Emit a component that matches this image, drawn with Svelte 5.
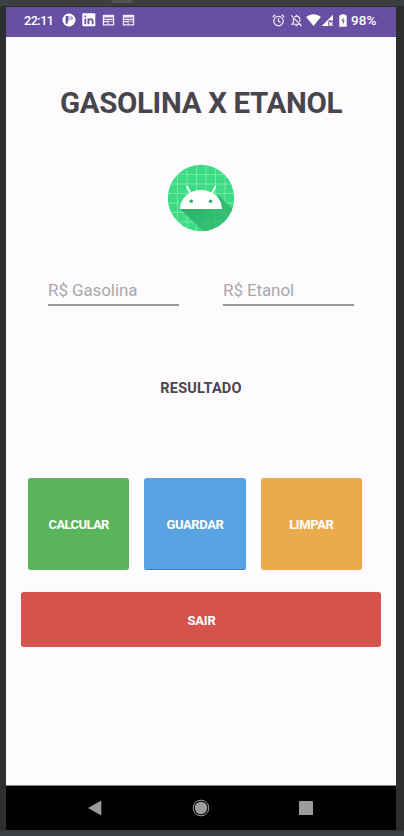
<script>
  let gasolina = $state('');
  let etanol = $state('');
  const actions = [
    { label: 'CALCULAR', kind: 'green' },
    { label: 'GUARDAR', kind: 'blue' },
    { label: 'LIMPAR', kind: 'orange' }
  ];
  const gridLines = [9.5, 19, 28.5, 38, 47.5, 57];
</script>

<div class="desktop">
  <div class="topbar"><span class="handle"></span></div>
  <div class="phone">
    <header class="status">
      <span class="clock">22:11</span>
      <svg class="i1" width="14" height="14" viewBox="0 0 14 14"><circle cx="7" cy="7" r="6.5" fill="#fff" /><path d="M3.6 3h2.9v5.2h-.8v2.6H3.6z" fill="#674fa3" /><path d="M7.4 3.5h2a1.6 1.6 0 0 1 0 3.2h-2z" fill="#8a76b9" /><circle cx="8.6" cy="5.1" r=".9" fill="#fff" /></svg>
      <svg class="i2" width="14" height="14" viewBox="0 0 14 14"><rect x=".3" y=".3" width="13" height="13" rx="1" fill="#fff" /><path d="M2.4 5.4h1.8v5.8H2.4zM2.4 2.5h1.8v1.7H2.4zM5.5 5.4h1.7v.8c1.2-1.6 4.3-1.2 4.3 1.7v3.3H9.8V8.4c0-2-2.5-2-2.5 0v2.8H5.5z" fill="#674fa3" /></svg>
      {#each [3, 4] as n}
        <svg class="i{n}" width="13" height="12" viewBox="0 0 13 12"><path d="M.8.8h11.4v10.7H.8z" fill="#f1edf8" /><path d="M2 3.4h9v1.3H2zM2 6h3.7v1H2zM2 8.3h3.7v1.9H2zM6.6 6H11v4.2H6.6z" fill="#674fa3" /><path d="M7.3 6.7H11v1.6H7.3z" fill="#b5a8d3" /></svg>
      {/each}
      <span class="grow"></span>
      <svg class="alarm" width="13" height="13" viewBox="0 0 13 13" fill="none" stroke="#f4f0fb" stroke-width="1.2"><circle cx="6.5" cy="7" r="4.7" /><path d="M6.5 4.2v3l2 1.3M.7 3 3.3.8M12.3 3 9.7.8" /></svg>
      <svg class="bell" width="13" height="13" viewBox="0 0 13 13" fill="none" stroke="#f4f0fb" stroke-width="1.1"><path d="M3.4 4.5v4.2L2 10.2h9M4.6 3.2c1.8-2 5.2-.9 5.2 2.2V8M6.5 2V.7M5.4 11.8h2.3M1.2 1.4l10.5 10.8" /></svg>
      <svg class="wifi" width="15" height="12" viewBox="0 0 15 12"><path d="M.2 3C4.5-.6 10.5-.6 14.8 3L7.5 12z" fill="#fff" /></svg>
      <svg class="signal" width="13" height="13" viewBox="0 0 13 13"><path d="M12 .7v5.7H7.3V12H.7z" fill="#fff" /><path d="m8.1 8.1 3.6 3.7m0-3.7-3.6 3.7" stroke="#fff" stroke-width="1.3" /></svg>
      <svg class="battery" width="8" height="13" viewBox="0 0 8 13"><path d="M2.3.3h3.4v1h2v11.4H.3V1.3h2z" fill="#fff" /><path d="M4.4 3.4 2.4 7h1.4v3.4L5.8 6.4H4.4z" fill="#674fa3" /></svg>
      <span class="percent">98%</span>
    </header>

    <main>
      <h1>GASOLINA X ETANOL</h1>
      <svg class="logo" width="68" height="68" viewBox="0 0 68 68">
        <defs><clipPath id="disc"><circle cx="34" cy="34" r="33.2" /></clipPath>
          <linearGradient id="shade" x1="0" y1="0" x2="1" y2="1"><stop offset="0" stop-color="#249c5c" /><stop offset="1" stop-color="#35c676" /></linearGradient></defs>
        <g clip-path="url(#disc)">
          <rect width="68" height="68" fill="#3ddc84" />
          {#each gridLines as p}
            <path d="M{p + 1} 0v68M0 {p + 1}h68" stroke="#86e9b3" stroke-width=".8" />
          {/each}
          <path d="M13.5 45 40 71h28V47L51 31l3.5 14z" fill="url(#shade)" opacity=".8" />
        </g>
        <path d="M13 45a21 19 0 0 1 42 0z" fill="#fff" />
        <path d="m24 30-4-7.5M44.5 30l4-7.5" stroke="#fff" stroke-width="1.7" stroke-linecap="round" />
        <circle cx="24.2" cy="37.3" r="1.8" fill="#32ae6b" /><circle cx="43.5" cy="37.3" r="1.8" fill="#32ae6b" />
      </svg>
      <div class="fields">
        <input class="gas" placeholder="R$ Gasolina" bind:value={gasolina} />
        <input class="eta" placeholder="R$ Etanol" bind:value={etanol} />
      </div>
      <p class="result">RESULTADO</p>
      <div class="actions">
        {#each actions as a}
          <button class={a.kind}><span>{a.label}</span></button>
        {/each}
      </div>
      <button class="exit"><span>SAIR</span></button>
    </main>

    <nav>
      <svg class="back" width="14" height="16" viewBox="0 0 14 16"><path d="M0 8 13.3.5v15z" fill="#9c9c9c" /></svg>
      <svg class="home" width="18" height="18" viewBox="0 0 18 18"><circle cx="9" cy="9" r="7.8" fill="none" stroke="#9c9c9c" /><circle cx="9" cy="9" r="6.2" fill="#9c9c9c" /></svg>
      <svg class="recent" width="14" height="14" viewBox="0 0 14 14"><rect width="14" height="14" rx=".6" fill="#9c9c9c" /></svg>
    </nav>
  </div>
</div>

<style>
  .desktop { width: 404px; height: 836px; background: linear-gradient(#3c3f41 6px, #2d2e30 6px, #2d2e30 830px, #3c3f41 831px); font-family: Roboto, sans-serif; overflow: hidden; }
  .topbar { height: 7px; }
  .handle { display: block; width: 22px; height: 3px; margin-left: 111px; background: #505355; border-radius: 0 0 3px 3px; }
  .phone { width: 390px; height: 823px; margin-left: 6px; display: flex; flex-direction: column; background: #fefbfe; }
  .status { height: 30px; box-sizing: border-box; padding: 0 18px 4px; display: flex; align-items: center; background: #674fa3; color: #fff; font-weight: 500; }
  .status svg { flex: none; }
  .clock { width: 38px; font-size: 12.5px; letter-spacing: -.45px; }
  .i2 { margin-left: 6px; }
  .i3 { margin-left: 6px; }
  .i4 { margin-left: 7px; }
  .grow { flex: 1; }
  .bell { margin-left: 5px; }
  .wifi { margin-left: 3px; }
  .signal { margin-left: 0; }
  .battery { margin-left: 5px; }
  .percent { width: 27px; margin-left: 4px; white-space: nowrap; font-size: 13.5px; letter-spacing: .1px; }
  main { flex: 1; display: flex; flex-direction: column; }
  h1 { margin: 48px 0 0; height: 36px; line-height: 36px; text-align: center; font-size: 29.5px; font-weight: 700; letter-spacing: -.33px; color: #48464c; white-space: nowrap; }
  .logo { display: block; margin: 43px 0 0 161px; }
  .fields { display: flex; gap: 44px; margin: 43px 0 0 42px; }
  input { width: 131px; height: 31px; box-sizing: border-box; border: 0; border-bottom: 2px solid #98969c; padding: 1px 0 0; background: transparent; font: 400 17px Roboto, sans-serif; letter-spacing: -.1px; color: #48464c; outline: none; border-radius: 0; }
  input::placeholder { color: #aaa8ab; opacity: 1; }
  .result { margin: 73px 0 0; height: 20px; line-height: 20px; text-align: center; font-size: 14.5px; font-weight: 700; letter-spacing: .2px; color: #48464c; }
  .actions { display: flex; gap: 15px; margin: 79px 34px 0 22px; height: 92px; }
  button { border: 0; border-radius: 3px; padding: 0; color: #fff; font: 700 13px Roboto, sans-serif; letter-spacing: -.4px; box-shadow: 0 0 1px rgba(0, 0, 0, .15); }
  .actions button { flex: 1; }
  .green { letter-spacing: -.6px; background: #5ab45c; }
  .blue { background: #5aa2e2; }
  .orange { background: #ebab4c; }
  .exit { margin: 22px 15px 0; height: 55px; padding: 2px 0 0 1px; background: #d6524d; letter-spacing: -.2px; }
  .actions .blue { box-shadow: inset 0 -1px #427fb8; }
  nav { height: 44px; border-top: 1px solid #858585; background: #000; display: flex; align-items: center; padding-left: 82px; }
  .home { margin-left: 90px; }
  .recent { margin-left: 89px; }
</style>
